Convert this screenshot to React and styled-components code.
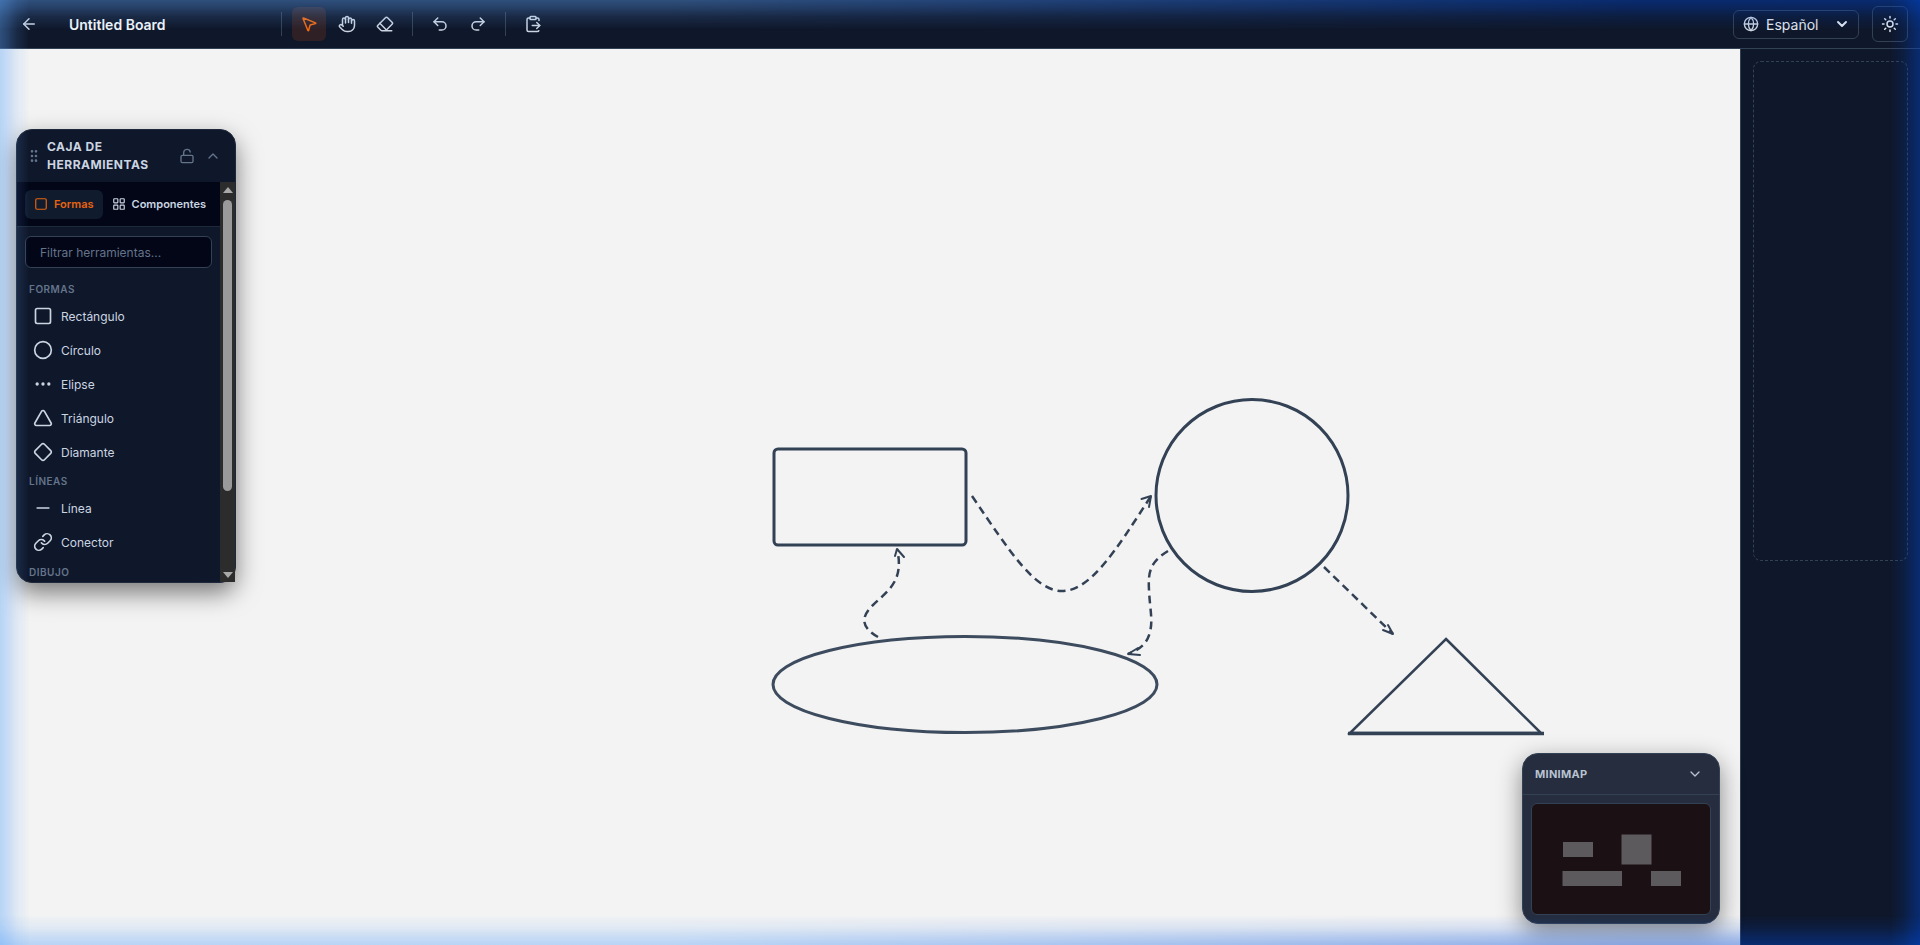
import styled, { createGlobalStyle } from "styled-components";
import {
  ArrowLeft,
  MousePointer2,
  Hand,
  Eraser,
  Undo2,
  Redo2,
  ClipboardPaste,
  Globe,
  ChevronDown,
  ChevronUp,
  Sun,
  GripVertical,
  LockOpen,
  Square,
  LayoutGrid,
  Circle,
  Ellipsis,
  Triangle,
  Diamond,
  Minus,
  Link,
} from "lucide-react";

const GlobalStyle = createGlobalStyle`
  html, body {
    margin: 0;
    padding: 0;
    height: 100%;
    overflow: hidden;
    background: #f3f3f3;
    font-family: Inter, "Liberation Sans", sans-serif;
  }
  * { box-sizing: border-box; }
`;

const Page = styled.div`
  position: relative;
  width: 100%;
  height: 100vh;
  display: flex;
  flex-direction: column;
`;

// Blue glow around the window, lies over everything.
// Lighter blue on the left, deeper blue on the right
const glowLeft = "rgba(96, 165, 250, 0.4)";
const glowRight = "rgba(0, 74, 215, 0.4)";
const fade = (dir) =>
  `linear-gradient(to ${dir}, #000 0, rgba(0, 0, 0, 0.72) 8px, rgba(0, 0, 0, 0.32) 17px, transparent 30px)`;

const GlowBar = styled.div`
  position: absolute;
  left: 0;
  right: 0;
  height: 30px;
  ${(p) => (p.$bottom ? "bottom: 0;" : "top: 0;")}
  pointer-events: none;
  z-index: 50;
  background: linear-gradient(to right, ${glowLeft} 35%, ${glowRight} 85%);
  mask-image: ${(p) => fade(p.$bottom ? "top" : "bottom")};
`;

const GlowSide = styled.div`
  position: absolute;
  top: 0;
  bottom: 0;
  width: 30px;
  ${(p) => (p.$right ? "right: 0;" : "left: 0;")}
  pointer-events: none;
  z-index: 50;
  background: ${(p) => (p.$right ? glowRight : glowLeft)};
  mask-image: ${(p) => fade(p.$right ? "left" : "right")};
`;

// Header *************************************************
const Header = styled.header`
  height: 49px;
  flex: none;
  display: flex;
  align-items: center;
  padding: 0 12px;
  background: #0f172a;
  border-bottom: 1px solid #334155;
`;

const IconButton = styled.button`
  width: 34px;
  height: 34px;
  flex: none;
  display: flex;
  align-items: center;
  justify-content: center;
  padding: 0;
  border: none;
  border-radius: 6px;
  background: ${(p) => (p.$active ? "rgba(234, 88, 12, 0.15)" : "transparent")};
  color: ${(p) => (p.$active ? "#f26a10" : "#cbd5e1")};
`;

const Title = styled.div`
  width: 202px;
  margin-left: 23px;
  font-size: 14px;
  font-weight: 600;
  color: #f1f5f9;
`;

const ToolGroup = styled.div`
  display: flex;
  gap: 4px;
`;

const Divider = styled.div`
  width: 1px;
  height: 24px;
  margin: 0 10px;
  background: #334155;
`;

const HeaderRight = styled.div`
  margin-left: auto;
  display: flex;
  align-items: center;
  gap: 13px;
`;

const LangSelect = styled.div`
  width: 126px;
  height: 29px;
  display: flex;
  align-items: center;
  padding: 0 8px 0 9px;
  border: 1px solid #334155;
  border-radius: 6px;
  color: #cbd5e1;
`;

const LangLabel = styled.span`
  margin-left: 7px;
  font-size: 14px;
  color: #e2e8f0;
`;

const LangChevron = styled(ChevronDown)`
  margin-left: auto;
  stroke-width: 3;
  color: #e2e8f0;
`;

const ThemeButton = styled.button`
  width: 36px;
  height: 36px;
  display: flex;
  align-items: center;
  justify-content: center;
  padding: 0;
  background: transparent;
  border: 1px solid #334155;
  border-radius: 6px;
  color: #e2e8f0;
`;

// Body ***************************************************
const Body = styled.div`
  flex: 1;
  min-height: 0;
  display: flex;
`;

const Canvas = styled.main`
  position: relative;
  flex: 1;
  background: #f3f3f3;
`;

const Drawing = styled.svg`
  display: block;
  width: 100%;
  height: 100%;
`;

const SidePanel = styled.aside`
  width: 180px;
  flex: none;
  padding: 12px;
  background: #0f172a;
  border-left: 1px solid #334155;
`;

const DropZone = styled.div`
  height: 500px;
  border: 1px dashed #334155;
  border-radius: 8px;
`;

// Toolbox ************************************************
const Toolbox = styled.section`
  position: absolute;
  left: 16px;
  top: 80px;
  width: 220px;
  height: 454px;
  display: flex;
  flex-direction: column;
  background: #0f172a;
  border: 1px solid #1e293b;
  border-radius: 16px;
  box-shadow: 0 10px 24px rgba(0, 0, 0, 0.5);
`;

const ToolboxHeader = styled.div`
  height: 52px;
  flex: none;
  display: flex;
  align-items: center;
  padding: 0 14px 0 9px;
  color: #64748b;
`;

const ToolboxTitle = styled.div`
  width: 112px;
  margin-left: 5px;
  font-size: 12px;
  font-weight: 700;
  line-height: 18px;
  letter-spacing: 0.5px;
  color: #cbd5e1;
  text-transform: uppercase;
  white-space: normal;
`;

const ToolboxActions = styled.div`
  margin-left: auto;
  display: flex;
  align-items: center;
  gap: 10px;
`;

const ToolboxBody = styled.div`
  flex: 1;
  min-height: 0;
  display: flex;
`;

const ToolboxContent = styled.div`
  flex: 1;
  min-width: 0;
  overflow: hidden;
  border-bottom-left-radius: 15px;
`;

// classic scrollbar with its two arrow buttons
const ScrollBar = styled.div`
  width: 15px;
  flex: none;
  display: flex;
  flex-direction: column;
  align-items: center;
  background: #2c2c2c;
`;

const ScrollArrow = styled.div`
  height: 15px;
  flex: none;
  margin-top: ${(p) => (p.$down ? "auto" : "0")};
  display: flex;
  align-items: center;
  &::before {
    content: "";
    border-left: 5px solid transparent;
    border-right: 5px solid transparent;
    ${(p) => (p.$down ? "border-top" : "border-bottom")}: 6px solid #a8a8a8;
  }
`;

const ScrollThumb = styled.div`
  width: 9px;
  height: 291px;
  margin-top: 3px;
  border-radius: 5px;
  background: #9a9a9a;
`;

const Tabs = styled.div`
  height: 45px;
  display: flex;
  align-items: center;
  padding: 0 8px;
  background: #020617;
  border-bottom: 1px solid #1e293b;
`;

const Tab = styled.div`
  height: 29px;
  display: flex;
  align-items: center;
  gap: 6px;
  padding: 0 9px;
  border-radius: 6px;
  font-size: 11px;
  font-weight: 600;
  white-space: nowrap;
  background: ${(p) => (p.$active ? "#111b2e" : "transparent")};
  color: ${(p) => (p.$active ? "#e8640f" : "#cbd5e1")};
`;

const Filter = styled.input`
  display: block;
  width: 187px;
  height: 32px;
  margin: 9px 0 0 8px;
  padding: 0 14px;
  background: #020617;
  border: 1px solid #334155;
  border-radius: 6px;
  font-family: inherit;
  font-size: 12px;
  color: #e2e8f0;
  &::placeholder {
    color: #64748b;
  }
`;

const Section = styled.div`
  padding: 0 8px;
`;

const SectionLabel = styled.div`
  height: 16px;
  margin-top: ${(p) => p.$top}px;
  margin-bottom: 2px;
  padding-left: 4px;
  font-size: 10px;
  font-weight: 600;
  line-height: 16px;
  letter-spacing: 0.5px;
  color: #64748b;
  text-transform: uppercase;
`;

const Item = styled.div`
  height: 34px;
  display: flex;
  align-items: center;
  gap: 8px;
  padding-left: 8px;
  font-size: 12px;
  color: #cbd5e1;
`;

// Minimap ************************************************
const Minimap = styled.section`
  position: absolute;
  right: 20px;
  bottom: 21px;
  width: 198px;
  height: 171px;
  display: flex;
  flex-direction: column;
  background: #252d3e;
  border: 1px solid #334155;
  border-radius: 16px;
  box-shadow: 0 8px 24px rgba(0, 0, 0, 0.45);
`;

const MinimapHeader = styled.div`
  height: 41px;
  flex: none;
  display: flex;
  align-items: center;
  justify-content: space-between;
  padding: 0 16px 0 12px;
  border-bottom: 1px solid #334155;
  font-size: 11px;
  font-weight: 700;
  letter-spacing: 0.3px;
  color: #b8c2d0;
`;

const MinimapBody = styled.div`
  flex: 1;
  min-height: 0;
  padding: 8px;
`;

const MinimapView = styled.svg`
  display: block;
  width: 100%;
  height: 100%;
  background: #1b1115;
  border: 1px solid #334155;
  border-radius: 6px;
`;

const shapeStroke = "#334155";

const Arrow = ({ d }) => (
  <path d={d} fill="none" stroke={shapeStroke} strokeWidth="2" strokeLinecap="round" strokeLinejoin="round" />
);

const Dashed = ({ d }) => (
  <path d={d} fill="none" stroke={shapeStroke} strokeWidth="2.5" strokeDasharray="8 5" />
);

const TOOLBOX_GROUPS = [
  {
    label: "Formas",
    top: 13,
    items: [
      ["Rectángulo", Square],
      ["Círculo", Circle],
      ["Elipse", Ellipsis],
      ["Triángulo", Triangle],
      ["Diamante", Diamond],
    ],
  },
  {
    label: "Líneas",
    top: 4,
    items: [
      ["Línea", Minus],
      ["Conector", Link],
    ],
  },
  {
    label: "Dibujo",
    top: 5,
    items: [],
  },
];

export default function App() {
  return (
    <Page>
      <GlobalStyle />
      <Header>
        <IconButton>
          <ArrowLeft size={18} />
        </IconButton>
        <Title>Untitled Board</Title>
        <Divider />
        <ToolGroup>
          <IconButton $active>
            <MousePointer2 size={18} />
          </IconButton>
          <IconButton>
            <Hand size={18} />
          </IconButton>
          <IconButton>
            <Eraser size={18} />
          </IconButton>
        </ToolGroup>
        <Divider />
        <ToolGroup>
          <IconButton>
            <Undo2 size={18} />
          </IconButton>
          <IconButton>
            <Redo2 size={18} />
          </IconButton>
        </ToolGroup>
        <Divider />
        <IconButton>
          <ClipboardPaste size={18} />
        </IconButton>
        <HeaderRight>
          <LangSelect>
            <Globe size={16} />
            <LangLabel>Español</LangLabel>
            <LangChevron size={16} />
          </LangSelect>
          <ThemeButton>
            <Sun size={18} />
          </ThemeButton>
        </HeaderRight>
      </Header>
      <Body>
        <Canvas>
          <Drawing viewBox="0 49 1740 896">
            <rect x="774" y="449" width="192" height="96" rx="4" fill="none" stroke={shapeStroke} strokeWidth="3" />
            <circle cx="1252" cy="495.5" r="96" fill="none" stroke={shapeStroke} strokeWidth="3" />
            <ellipse cx="965" cy="684.5" rx="192" ry="48" fill="none" stroke={shapeStroke} strokeWidth="3" opacity="0.95" />
            <path d="M1446 639 L1541 733 L1350 733 Z" fill="none" stroke={shapeStroke} strokeWidth="2.5" />
            <path d="M1348 733.5 L1544 733.5" fill="none" stroke={shapeStroke} strokeWidth="3.5" />

            <Dashed d="M972 496 C1010 552 1035 591 1062 591 C1090 591 1115 552 1151 496" />
            <Arrow d="M1141.5 499 L1151 496 L1149 507" />

            <Dashed d="M878 637 C862 628 860 618 872 606 C886 592 905 582 897 549" />
            <Arrow d="M895 556 L897 549 L904 557" />

            <Dashed d="M1168 551 C1150 562 1148 572 1149 590 C1150 610 1153 620 1150 632 C1147 645 1138 650 1128 654" />
            <Arrow d="M1138 648 L1128 654 L1140 655" />

            <Dashed d="M1324 567 L1393 634" />
            <Arrow d="M1383 630 L1393 634 L1388 625" />
          </Drawing>

          <Toolbox>
            <ToolboxHeader>
              <GripVertical size={16} />
              <ToolboxTitle>Caja de herramientas</ToolboxTitle>
              <ToolboxActions>
                <LockOpen size={16} />
                <ChevronUp size={16} />
              </ToolboxActions>
            </ToolboxHeader>
            <ToolboxBody>
              <ToolboxContent>
                <Tabs>
                  <Tab $active>
                    <Square size={14} />
                    Formas
                  </Tab>
                  <Tab>
                    <LayoutGrid size={14} />
                    Componentes
                  </Tab>
                </Tabs>
                <Filter placeholder="Filtrar herramientas..." />
                {TOOLBOX_GROUPS.map((group) => (
                  <Section key={group.label}>
                    <SectionLabel $top={group.top}>{group.label}</SectionLabel>
                    {group.items.map(([name, Icon]) => (
                      <Item key={name}>
                        <Icon size={20} />
                        {name}
                      </Item>
                    ))}
                  </Section>
                ))}
              </ToolboxContent>
              <ScrollBar>
                <ScrollArrow />
                <ScrollThumb />
                <ScrollArrow $down />
              </ScrollBar>
            </ToolboxBody>
          </Toolbox>

          <Minimap>
            <MinimapHeader>
              MINIMAP
              <ChevronDown size={16} />
            </MinimapHeader>
            <MinimapBody>
              <MinimapView viewBox="0 0 178 110">
                <g fill="#5d5a5e">
                  <rect x="31" y="38" width="30" height="15" />
                  <rect x="89.5" y="30.5" width="30" height="30" />
                  <rect x="30.5" y="67" width="59.5" height="15" />
                  <rect x="119" y="67" width="30" height="15" />
                </g>
              </MinimapView>
            </MinimapBody>
          </Minimap>
        </Canvas>
        <SidePanel>
          <DropZone />
        </SidePanel>
      </Body>
      <GlowBar />
      <GlowBar $bottom />
      <GlowSide />
      <GlowSide $right />
    </Page>
  );
}
